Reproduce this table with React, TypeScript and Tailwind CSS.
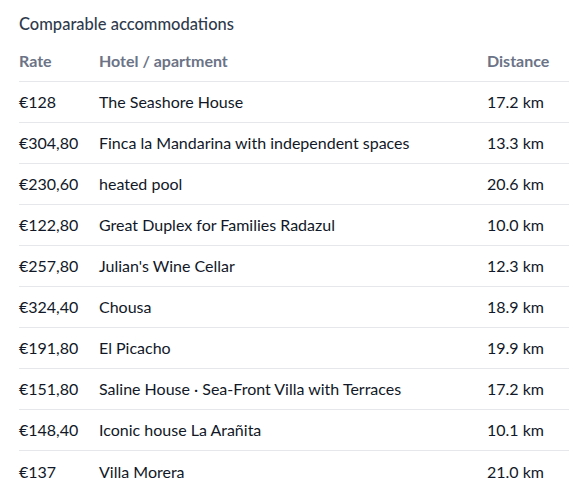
const rows = [
  ['€128', 'The Seashore House', '17.2 km'],
  ['€304,80', 'Finca la Mandarina with independent spaces', '13.3 km'],
  ['€230,60', 'heated pool', '20.6 km'],
  ['€122,80', 'Great Duplex for Families Radazul', '10.0 km'],
  ['€257,80', "Julian's Wine Cellar", '12.3 km'],
  ['€324,40', 'Chousa', '18.9 km'],
  ['€191,80', 'El Picacho', '19.9 km'],
  ['€151,80', 'Saline House · Sea-Front Villa with Terraces', '17.2 km'],
  ['€148,40', 'Iconic house La Arañita', '10.1 km'],
  ['€137', 'Villa Morera', '21.0 km'],
]

export default function App() {
  return (
    <div className="bg-white pl-[19px] pr-[5px] pt-[14px] font-['Lato',sans-serif] text-[16px]">
      <h2 className="h-[20px] text-[16.5px] leading-[20px] font-medium text-[#2f3a4c]">
        Comparable accommodations
      </h2>
      <div className="mt-[7px] grid h-[41px] grid-cols-[80px_1fr_82px] items-center border-b border-[#e5e7eb] font-bold text-[#6b7386]">
        <span>Rate</span>
        <span>Hotel / apartment</span>
        <span>Distance</span>
      </div>
      {rows.map(([rate, name, dist], i) => (
        <div
          key={i}
          className={`grid h-[41px] grid-cols-[80px_1fr_82px] items-center text-[#111827] ${i < rows.length - 1 ? 'border-b border-[#e5e7eb]' : ''}`}
        >
          <span>{rate}</span>
          <span>{name}</span>
          <span>{dist}</span>
        </div>
      ))}
    </div>
  )
}
